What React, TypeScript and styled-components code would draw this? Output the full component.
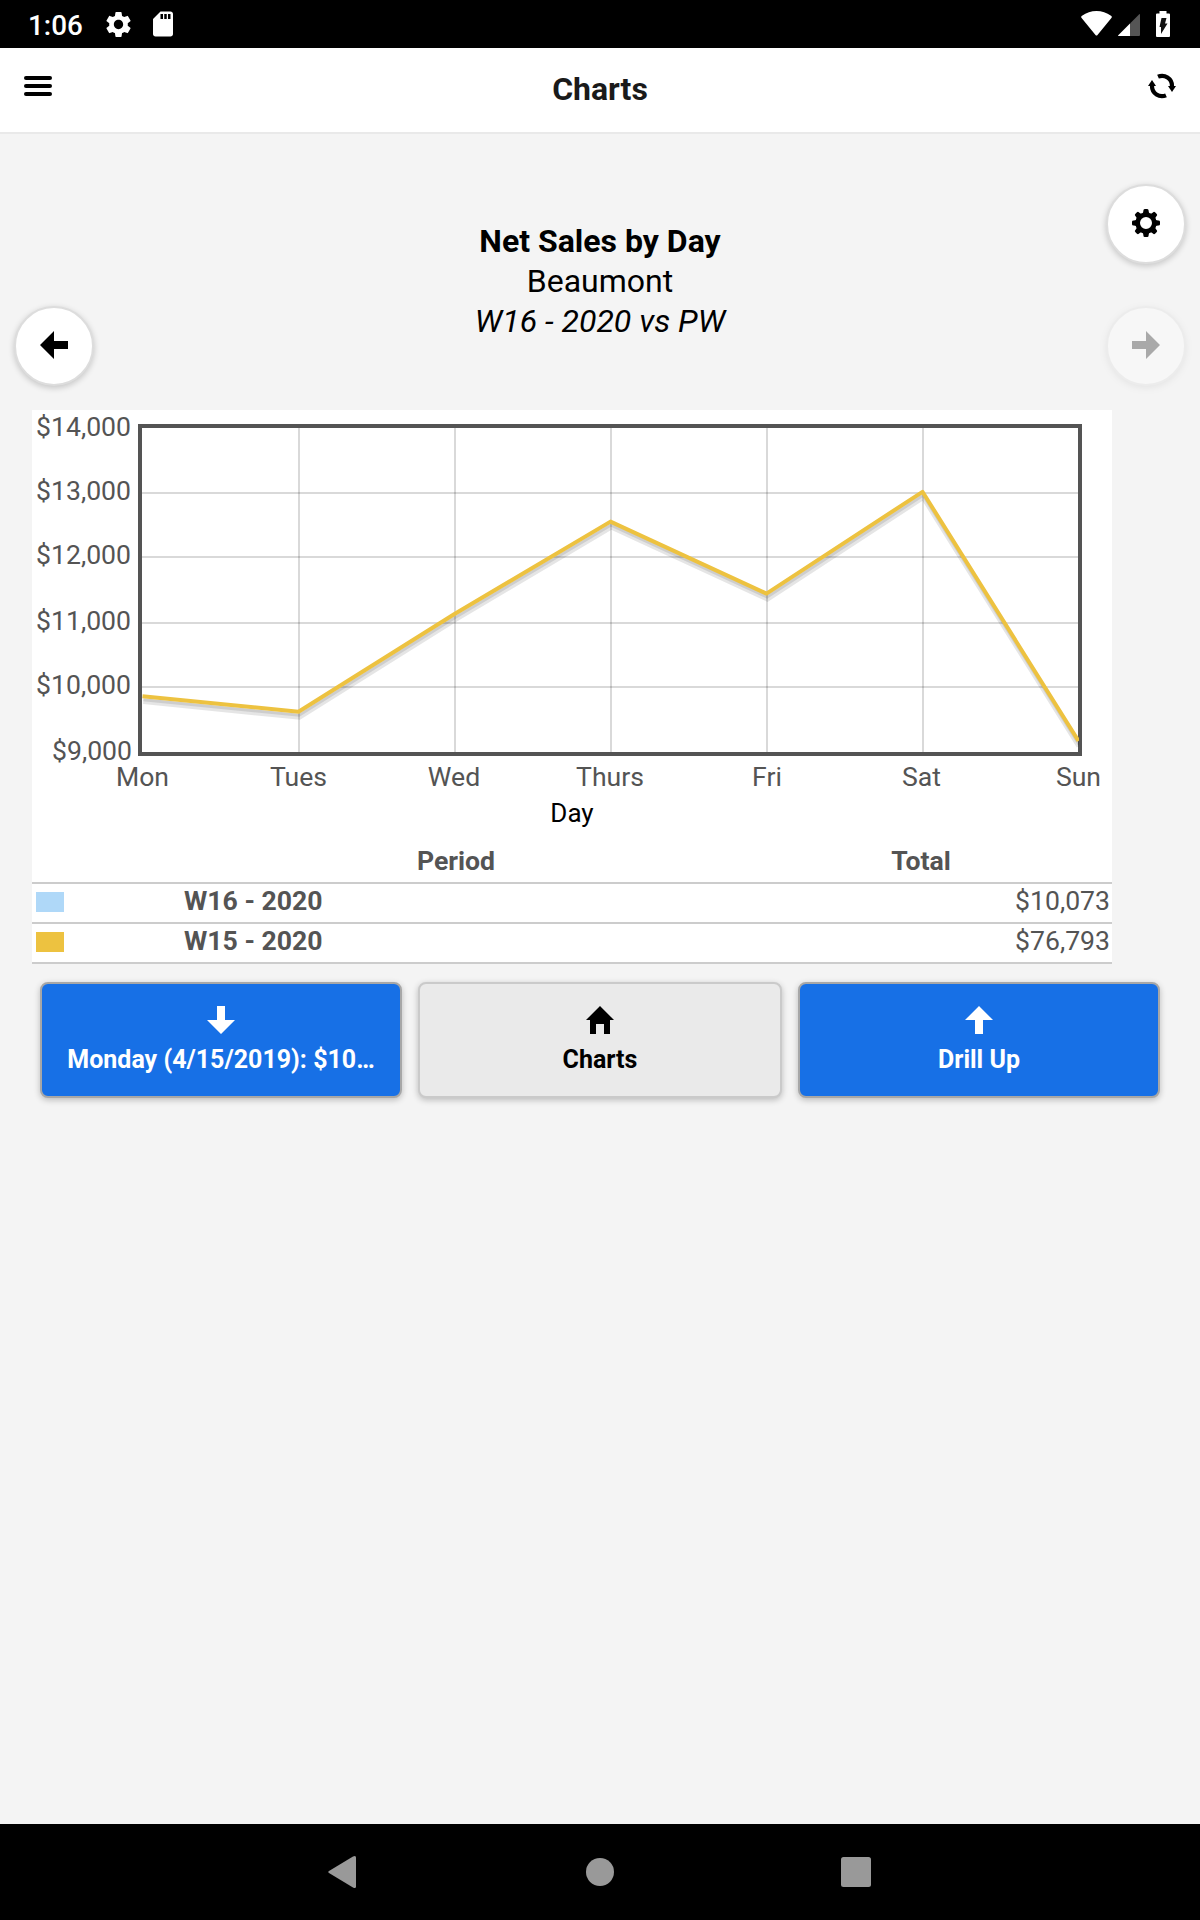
import React from "react";
import styled, { createGlobalStyle } from "styled-components";
import { MdSettings, MdSdCard } from "react-icons/md";

const GlobalStyle = createGlobalStyle`
  * { box-sizing: border-box; }
  body {
    margin: 0;
    background: #f4f4f4;
    font-family: Roboto, "Liberation Sans", sans-serif;
    color: #000;
  }
  svg { display: block; flex: none; }
`;

const Screen = styled.div`
  width: 1200px;
  height: 1920px;
  display: flex;
  flex-direction: column;
  background: #f4f4f4;
  overflow: hidden;
`;

const StatusBar = styled.div`
  height: 48px;
  flex: none;
  background: #000;
  color: #fff;
  display: flex;
  align-items: center;
  justify-content: space-between;
  padding: 0 30px 0 28px;
`;

const StatusLeft = styled.div`
  display: flex;
  align-items: center;
`;

const Clock = styled.span`
  font-size: 27.8px;
  line-height: 46px;
  font-weight: 500;
  width: 75px;
  padding-top: 3px;
`;

const StatusIcon = styled.span<{ $gap?: number }>`
  display: flex;
  margin-right: ${(p) => p.$gap ?? 0}px;
`;

const Header = styled.header`
  height: 86px;
  flex: none;
  background: #fff;
  border-bottom: 2px solid #e9e9e9;
  display: flex;
  align-items: flex-start;
  justify-content: space-between;
  padding: 24px 24px 0;
`;

const HeaderTitle = styled.h1`
  margin: -3px 0 0;
  font-size: 32px;
  line-height: 40px;
  font-weight: 700;
  color: #1a1a1a;
`;

const Hero = styled.section`
  height: 276px;
  flex: none;
  display: grid;
  grid-template-columns: 80px 1fr 80px;
  padding: 0 14px;
`;

const Rail = styled.div<{ $top: number }>`
  display: flex;
  flex-direction: column;
  gap: 42px;
  padding-top: ${(p) => p.$top}px;
`;

const RoundButton = styled.button<{ $disabled?: boolean }>`
  width: 80px;
  height: 80px;
  padding: 0 0 2px;
  border: 2px solid #ddd;
  border-radius: 50%;
  background: #fff;
  box-shadow: 0 2px 6px rgba(0, 0, 0, 0.2);
  display: flex;
  align-items: center;
  justify-content: center;
  color: #000;
  opacity: ${(p) => (p.$disabled ? 0.3 : 1)};
`;

const Heading = styled.div`
  padding-top: 87px;
  text-align: center;
  font-size: 32px;
  line-height: 40px;
`;

const HeadingLine = styled.div<{ $bold?: boolean; $italic?: boolean }>`
  font-weight: ${(p) => (p.$bold ? 700 : 400)};
  font-style: ${(p) => (p.$italic ? "italic" : "normal")};
`;

const ChartPanel = styled.section`
  width: 1080px;
  flex: none;
  margin-left: 32px;
  background: #fff;
`;

const AxisTitle = styled.div`
  height: 30px;
  margin-top: -2px;
  text-align: center;
  font-size: 26px;
  line-height: 30px;
`;

const TickLabel = styled.text`
  font-size: 26.6px;
  fill: #545454;
`;

const Legend = styled.div`
  margin-top: 16px;
  color: #545454;
  font-size: 26.6px;
`;

const LegendRow = styled.div`
  height: 40px;
  display: grid;
  grid-template-columns: 150px 548px 382px;
  align-items: start;
  border-bottom: 2px solid #ccc;
  line-height: 34px;
`;

const HeadCell = styled.div<{ $start: number }>`
  grid-column-start: ${(p) => p.$start};
  text-align: center;
  font-weight: 700;
`;

const Swatch = styled.div<{ $color: string }>`
  width: 28px;
  height: 20px;
  margin: 8px 0 0 4px;
  background: ${(p) => p.$color};
`;

const PeriodCell = styled.div`
  padding-left: 2px;
  font-weight: 700;
`;

const TotalCell = styled.div`
  padding-right: 2px;
  text-align: right;
`;

const Actions = styled.div`
  flex: none;
  display: flex;
  gap: 16px;
  padding: 18px 40px 0;
`;

const ActionButton = styled.button<{ $primary?: boolean }>`
  flex: none;
  width: ${(p) => (p.$primary ? 362 : 364)}px;
  height: 116px;
  padding: 22px 20px 0;
  border: 2px solid ${(p) => (p.$primary ? "#a7a7a7" : "#cacaca")};
  border-radius: 8px;
  background: ${(p) => (p.$primary ? "#1770e6" : "#eaeaea")};
  color: ${(p) => (p.$primary ? "#fff" : "#000")};
  box-shadow: 0 2px 6px rgba(0, 0, 0, 0.24);
  font: 700 25px/32px Roboto, "Liberation Sans", sans-serif;
  display: flex;
  flex-direction: column;
  align-items: center;
  gap: 9px;
`;

const ActionLabel = styled.span`
  white-space: nowrap;
  padding-top: 1px;
  transform: scaleY(1.05);
`;

const NavBar = styled.nav`
  height: 96px;
  flex: none;
  margin-top: auto;
  background: #000;
  display: grid;
  grid-template-columns: 258px 255px 30px;
  align-items: center;
  padding-left: 328px;
`;

const PATHS = {
  left: "M0 7L7 0V5H14V9H7V14Z",
  right: "M14 7L7 0V5H0V9H7V14Z",
  down: "M7 14L0 7H5V0H9V7H14Z",
  up: "M7 0L14 7H9V14H5V7H0Z",
  home: "M7 0L14 7H12V14H9V9H5V14H2V7H0Z",
};

function Glyph({ name }: { name: keyof typeof PATHS }) {
  return (
    <svg width="28" height="28" viewBox="0 0 14 14" fill="currentColor">
      <path d={PATHS[name]} />
    </svg>
  );
}

function GearGlyph() {
  return (
    <svg width="28" height="28" viewBox="-7 -7 14 14">
      <circle r="4.15" fill="none" stroke="#000" strokeWidth="2.3" />
      {[0, 45, 90, 135, 180, 225, 270, 315].map((a) => (
        <path key={a} transform={`rotate(${a})`} d="M-1.8 -4.7Q-1.3 -5.2 -1.3 -6.2Q-1.3 -7 -.6 -7H.6Q1.3 -7 1.3 -6.2Q1.3 -5.2 1.8 -4.7Z" />
      ))}
    </svg>
  );
}

function RefreshGlyph() {
  return (
    <svg width="28" height="28" viewBox="0 0 14 14">
      <path d="M5 2.35A5 5 0 0 1 12 7" fill="none" stroke="#000" strokeWidth="2.1" />
      <path d="M10 7H14L12 10Z" />
      <path d="M9 11.65A5 5 0 0 1 2 7" fill="none" stroke="#000" strokeWidth="2.1" />
      <path d="M0 7H4L2 4Z" />
    </svg>
  );
}

function MenuGlyph() {
  return (
    <svg width="28" height="28" viewBox="0 0 28 28">
      {[4, 12, 20].map((y) => (
        <rect key={y} y={y} width="28" height="4" rx="2" />
      ))}
    </svg>
  );
}

const TICKS_Y = [
  { label: "$14,000", base: 436, end: 131 },
  { label: "$13,000", base: 500, end: 131 },
  { label: "$12,000", base: 564, end: 131 },
  { label: "$11,000", base: 630, end: 131 },
  { label: "$10,000", base: 694, end: 131 },
  { label: "$9,000", base: 760, end: 132 },
];
const GRID_Y = [493, 557, 623, 687];
const DAYS = [
  { label: "Mon", x: 142.5 },
  { label: "Tues", x: 298.5 },
  { label: "Wed", x: 454 },
  { label: "Thurs", x: 610 },
  { label: "Fri", x: 767 },
  { label: "Sat", x: 921.5 },
  { label: "Sun", x: 1078.5 },
];
const SERIES = [696.2, 711.8, 614, 521.6, 593.6, 491.8, 741];
const linePoints = SERIES.map((y, i) => `${142.5 + i * 156},${y}`).join(" ");

function SalesChart() {
  return (
    <svg width="1080" height="390" viewBox="32 410 1080 390">
      <defs>
        <clipPath id="plot">
          <rect x="142" y="428" width="937" height="324" />
        </clipPath>
      </defs>
      <g fill="#000" fillOpacity="0.15">
        {GRID_Y.map((y) => (
          <rect key={y} x="142" y={y - 1} width="936" height="2" />
        ))}
        {[1, 2, 3, 4, 5].map((i) => (
          <rect key={i} x={142 + i * 156} y="428" width="2" height="324" />
        ))}
      </g>
      <rect x="140" y="426" width="940" height="328" fill="none" stroke="#545454" strokeWidth="4" />
      <g clipPath="url(#plot)" fill="none">
        <polyline points={linePoints} transform="translate(.87 4.92)" stroke="#000" strokeOpacity="0.1" strokeWidth="6" />
        <polyline points={linePoints} transform="translate(.6 3.45)" stroke="#000" strokeOpacity="0.1" strokeWidth="3" />
        <polyline points={linePoints} stroke="#edc240" strokeWidth="4" strokeLinejoin="round" />
      </g>
      {TICKS_Y.map((t) => (
        <TickLabel key={t.label} x={t.end} y={t.base} textAnchor="end">
          {t.label}
        </TickLabel>
      ))}
      {DAYS.map((d) => (
        <TickLabel key={d.label} x={d.x} y="786" textAnchor="middle">
          {d.label}
        </TickLabel>
      ))}
    </svg>
  );
}

export default function App() {
  return (
    <Screen>
      <GlobalStyle />
      <StatusBar>
        <StatusLeft>
          <Clock>1:06</Clock>
          <StatusIcon $gap={14}>
            <MdSettings size={31} />
          </StatusIcon>
          <StatusIcon>
            <MdSdCard size={30} />
          </StatusIcon>
        </StatusLeft>
        <StatusLeft>
          <StatusIcon $gap={6}>
            <svg width="31" height="26" viewBox="0 0 31 26" fill="#fff">
              <path d="M.6 7Q-.4 5.700 1 4.800Q7.500 0 15.500 0T30 4.800Q31.400 5.700 30.400 7L16.500 24Q15.500 25 14.500 24Z" />
            </svg>
          </StatusIcon>
          <StatusIcon $gap={16}>
            <svg width="22" height="24" viewBox="0 -2 22 24">
              <path d="M22 1Q22 -.5 21 .5L12 9.500V22H21Q22 22 22 21Z" fill="#555" />
              <path d="M12 9.500L.5 21Q-.5 22 1 22H12Z" fill="#fff" />
            </svg>
          </StatusIcon>
          <StatusIcon>
            <svg width="14" height="26" viewBox="0 0 14 26">
              <path d="M3.500 0H10.500V2.500H13Q14 2.500 14 3.500V25Q14 26 13 26H1Q0 26 0 25V3.500Q0 2.500 1 2.500H3.500Z" fill="#fff" />
              <path d="M5.500 7H10.500L9 12.500H11.500L5 23V16H3.500Z" fill="#111" />
            </svg>
          </StatusIcon>
        </StatusLeft>
      </StatusBar>

      <Header>
        <MenuGlyph />
        <HeaderTitle>Charts</HeaderTitle>
        <RefreshGlyph />
      </Header>

      <Hero>
        <Rail $top={172}>
          <RoundButton aria-label="Previous">
            <Glyph name="left" />
          </RoundButton>
        </Rail>
        <Heading>
          <HeadingLine $bold>Net Sales by Day</HeadingLine>
          <HeadingLine>Beaumont</HeadingLine>
          <HeadingLine $italic>W16 - 2020 vs PW</HeadingLine>
        </Heading>
        <Rail $top={50}>
          <RoundButton aria-label="Settings">
            <GearGlyph />
          </RoundButton>
          <RoundButton aria-label="Next" $disabled>
            <Glyph name="right" />
          </RoundButton>
        </Rail>
      </Hero>

      <ChartPanel>
        <SalesChart />
        <AxisTitle>Day</AxisTitle>
        <Legend>
          <LegendRow>
            <HeadCell $start={2}>Period</HeadCell>
            <HeadCell $start={3}>Total</HeadCell>
          </LegendRow>
          <LegendRow>
            <Swatch $color="#afd8f8" />
            <PeriodCell>W16 - 2020</PeriodCell>
            <TotalCell>$10,073</TotalCell>
          </LegendRow>
          <LegendRow>
            <Swatch $color="#edc240" />
            <PeriodCell>W15 - 2020</PeriodCell>
            <TotalCell>$76,793</TotalCell>
          </LegendRow>
        </Legend>
      </ChartPanel>

      <Actions>
        <ActionButton $primary>
          <Glyph name="down" />
          <ActionLabel>Monday (4/15/2019): $10…</ActionLabel>
        </ActionButton>
        <ActionButton>
          <Glyph name="home" />
          <ActionLabel>Charts</ActionLabel>
        </ActionButton>
        <ActionButton $primary>
          <Glyph name="up" />
          <ActionLabel>Drill Up</ActionLabel>
        </ActionButton>
      </Actions>

      <NavBar>
        <svg width="28" height="34" viewBox="0 0 28 34" fill="#999">
          <path d="M1 16Q-.5 17 1 18L25 32.500Q28 34 28 31.500V2.500Q28 0 25 1.500Z" />
        </svg>
        <svg width="28" height="28" viewBox="0 0 28 28" fill="#999">
          <circle cx="14" cy="14" r="14" />
        </svg>
        <svg width="30" height="30" viewBox="0 0 30 30" fill="#999">
          <rect width="30" height="30" rx="2.500" />
        </svg>
      </NavBar>
    </Screen>
  );
}
